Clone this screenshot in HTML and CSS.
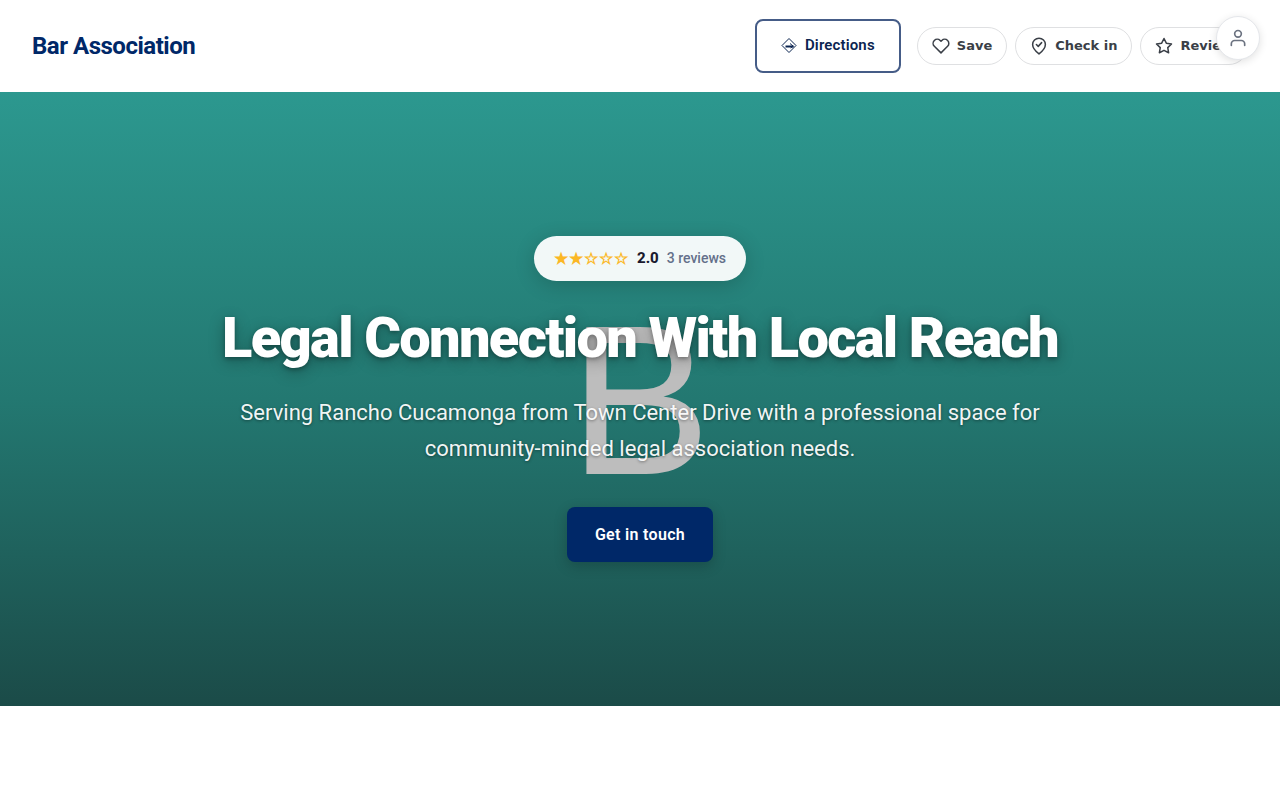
FILE: index.html
```html
<!DOCTYPE html>
<html lang="en">
<head>
<meta charset="utf-8">
<meta name="viewport" content="width=device-width, initial-scale=1">
<title>Bar Association</title>
<link rel="stylesheet" href="styles.css">
</head>
<body>
<header class="site-header">
  <a class="brand" href="#">Bar Association</a>
  <nav class="actions" aria-label="Business actions">
    <a class="directions" href="#">
      <svg class="directions-icon" viewBox="0 0 16 16" aria-hidden="true"><path d="M8 1.500 15 8.500 8 15.500 1 8.500Z"/><path class="directions-arrow" d="M4.500 9.500H12.500"/><path d="M9 6.500 12.300 9.300 9.500 11"/></svg>
      Directions
    </a>
    <div class="pills">
      <button class="pill" type="button">
        <svg class="pill-icon" viewBox="0 0 24 24" aria-hidden="true"><path d="M20.800 4.600a5.500 5.500 0 0 0-7.700 0L12 5.700l-1.100-1.100a5.500 5.500 0 0 0-7.800 7.800L12 21.200l8.800-8.800a5.500 5.500 0 0 0 0-7.800z"/></svg>
        Save
      </button>
      <button class="pill" type="button">
        <svg class="pill-icon" viewBox="0 0 24 24" aria-hidden="true"><path d="M12 22.500s8.500-6.500 8.500-12.500a8.500 8.500 0 0 0-17 0c0 6 8.500 12.500 8.500 12.500z"/><path d="m8.500 10 2.500 2.500L15.500 7.500"/></svg>
        Check in
      </button>
      <button class="pill" type="button">
        <svg class="pill-icon" viewBox="0 0 24 24" aria-hidden="true"><path d="m12 2 3.090 6.260L22 9.270l-5 4.870 1.180 6.880L12 17.770l-6.180 3.250L7 14.140 2 9.270l6.910-1.010z"/></svg>
        Review
      </button>
    </div>
  </nav>
  <button class="account" type="button" aria-label="Account">
    <svg class="account-icon" viewBox="0 0 24 24" aria-hidden="true"><path d="M20 21v-2a4 4 0 0 0-4-4H8a4 4 0 0 0-4 4v2"/><circle cx="12" cy="7" r="4"/></svg>
  </button>
</header>
<main>
  <section class="hero">
    <span class="monogram" aria-hidden="true">B</span>
    <div class="hero-content">
      <div class="rating">
        <span class="stars" role="img" aria-label="2 out of 5 stars">★★☆☆☆</span>
        <span class="score">2.0</span>
        <span class="count">3 reviews</span>
      </div>
      <h1 class="title">Legal Connection With Local Reach</h1>
      <p class="lead">Serving Rancho Cucamonga from Town Center Drive with a professional space for community-minded legal association needs.</p>
      <a class="cta" href="#">Get in touch</a>
    </div>
  </section>
</main>
</body>
</html>
```
FILE: styles.css
```css
* {
  box-sizing: border-box;
}

body {
  margin: 0;
  background: #fff;
  font-family: Roboto, sans-serif;
}

.site-header {
  position: relative;
  display: flex;
  align-items: center;
  justify-content: space-between;
  padding: 19px 32px;
  background: #fff;
}

.brand {
  color: #002868;
  font-size: 24px;
  font-weight: 700;
  letter-spacing: -0.02em;
  text-decoration: none;
}

.actions {
  display: flex;
  align-items: center;
  gap: 16px;
}

.directions {
  display: flex;
  align-items: center;
  gap: 8px;
  padding: 14px 24px 16px;
  border: 2px solid #455c87;
  border-radius: 8px;
  color: #0b2450;
  font-size: 15px;
  font-weight: 600;
  letter-spacing: 0.01em;
  line-height: 20px;
  text-decoration: none;
}

.directions-icon {
  width: 16px;
  height: 16px;
  fill: none;
  stroke: currentColor;
  stroke-width: 1;
}

.directions-arrow {
  stroke-width: 2;
}

.pills {
  display: flex;
  gap: 8px;
}

.pill {
  display: flex;
  align-items: center;
  gap: 7px;
  padding: 9px 14px;
  border: 1px solid #dfe0e2;
  border-radius: 20px;
  background: #fff;
  color: #3a3f47;
  font-family: "DejaVu Sans", sans-serif;
  font-size: 13px;
  font-weight: 600;
  line-height: 18px;
  white-space: nowrap;
}

.pill-icon {
  width: 18px;
  height: 18px;
  fill: none;
  stroke: currentColor;
  stroke-width: 2;
  stroke-linecap: round;
  stroke-linejoin: round;
}

.account {
  position: absolute;
  top: 16px;
  right: 20px;
  display: grid;
  place-items: center;
  width: 44px;
  height: 44px;
  padding: 0;
  border: 1px solid #e5e7eb;
  border-radius: 50%;
  background: #fff;
  box-shadow: 0 2px 8px rgba(0, 0, 0, 0.12);
  color: #6b7280;
}

.account-icon {
  width: 20px;
  height: 20px;
  fill: none;
  stroke: currentColor;
  stroke-width: 2;
  stroke-linecap: round;
}

.hero {
  display: grid;
  place-items: center;
  min-height: 614px;
  padding: 48px 32px;
  background: linear-gradient(180deg, #2c988f 0%, #237871 50%, #1b4b48 100%);
  color: #fff;
  text-align: center;
}

.monogram,
.hero-content {
  grid-area: 1 / 1;
}

.monogram {
  padding-top: 2px;
  color: #bdbdbd;
  font-family: "Liberation Sans", Arial, sans-serif;
  font-size: 213px;
  line-height: 216px;
}

.hero-content {
  z-index: 1;
  display: flex;
  flex-direction: column;
  align-items: center;
  max-width: 900px;
}

.rating {
  display: flex;
  align-items: center;
  gap: 8px;
  padding: 10px 20px;
  border-radius: 24px;
  background: rgba(255, 255, 255, 0.94);
  box-shadow: 0 4px 20px rgba(0, 0, 0, 0.18);
  font-size: 15px;
  line-height: 25px;
}

.stars {
  color: #fbb724;
  font-size: 16px;
  font-weight: 600;
  letter-spacing: 1px;
}

.score {
  color: #1a1a2e;
  font-weight: 800;
}

.count {
  color: #64708a;
  font-size: 14px;
  font-weight: 500;
}

.title {
  margin: 24px 0;
  font-size: 56px;
  font-weight: 900;
  letter-spacing: -0.03em;
  line-height: 66px;
  text-shadow: 0 2px 4px rgba(0, 0, 0, 0.3), 0 4px 16px rgba(0, 0, 0, 0.3);
}

.lead {
  max-width: 840px;
  margin: 0 0 40px;
  color: rgba(255, 255, 255, 0.95);
  font-size: 22px;
  line-height: 36px;
  text-shadow: 0 1px 3px rgba(0, 0, 0, 0.4);
}

.cta {
  padding: 16px 28px;
  border-radius: 8px;
  background: #002868;
  box-shadow: 0 4px 14px rgba(0, 0, 0, 0.2);
  color: #fff;
  font-size: 16px;
  font-weight: 600;
  letter-spacing: 0.02em;
  line-height: 23px;
  text-decoration: none;
}
```
